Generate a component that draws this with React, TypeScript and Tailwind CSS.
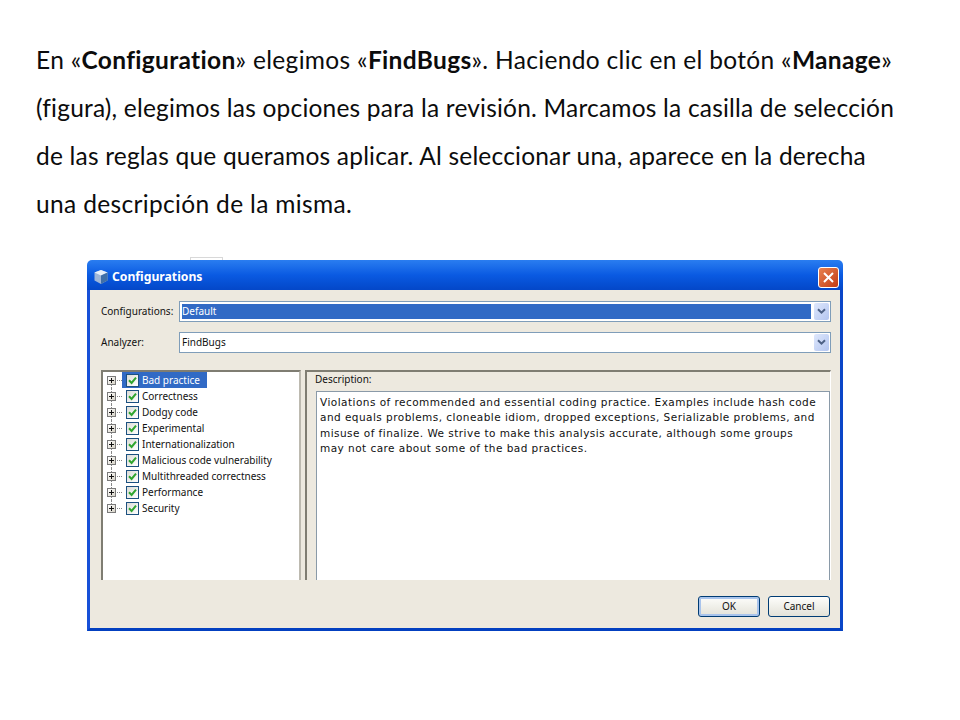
const rules = [
  "Bad practice",
  "Correctness",
  "Dodgy code",
  "Experimental",
  "Internationalization",
  "Malicious code vulnerability",
  "Multithreaded correctness",
  "Performance",
  "Security",
];

function Chevron() {
  return (
    <div className="w-[15px] h-[17px] rounded-[2px] bg-gradient-to-br from-[#dfe8fc] to-[#b3c5f0] flex items-center justify-center shrink-0">
      <svg width="9" height="7" viewBox="0 0 9 7">
        <path d="M1 1.2 L4.5 4.7 L8 1.2" fill="none" stroke="#4d6185" strokeWidth="2" />
      </svg>
    </div>
  );
}

function Combo({ label, value, selected }: { label: string; value: string; selected?: boolean }) {
  return (
    <div className="flex items-center h-[21px]">
      <div className="w-[78px] shrink-0 text-[10px] text-[#111]">{label}</div>
      <div className="w-[652px] h-[21px] border border-[#7f9db9] bg-white flex items-center pl-[2px] pr-[1px] gap-[3px]">
        <div className={selected ? "flex-1 h-[15px] bg-[#316ac5] text-white flex items-center text-[10px]" : "flex-1 h-[15px] text-[#111] flex items-center text-[10px]"}>
          {value}
        </div>
        <Chevron />
      </div>
    </div>
  );
}

function TreeRow({ label, first, last }: { label: string; first?: boolean; last?: boolean }) {
  return (
    <div className="h-[16px] flex items-center relative">
      <div
        className={
          last
            ? "absolute left-[7px] top-0 h-[8px] border-l border-dotted border-[#888]"
            : first
              ? "absolute left-[7px] top-[8px] h-[8px] border-l border-dotted border-[#888]"
              : "absolute left-[7px] top-0 h-[16px] border-l border-dotted border-[#888]"
        }
      />
      <div className="absolute left-[8px] top-[8px] w-[10px] border-t border-dotted border-[#888]" />
      <div className="relative ml-[3px] w-[9px] h-[9px] border border-[#7a7a7a] bg-gradient-to-br from-white to-[#d6d2c6] flex items-center justify-center shrink-0">
        <svg width="7" height="7" viewBox="0 0 7 7">
          <path d="M1 3.5 H6 M3.5 1 V6" stroke="#111" strokeWidth="1" />
        </svg>
      </div>
      <div className={first ? "relative ml-[6px] pl-[4px] h-[16px] w-[85px] bg-[#316ac5] text-white flex items-center" : "relative ml-[6px] pl-[4px] h-[16px] text-[#111] flex items-center"}>
        <div className="w-[13px] h-[13px] border border-[#1c5180] bg-gradient-to-br from-[#dcdcd7] to-white flex items-center justify-center shrink-0">
          <svg width="9" height="9" viewBox="0 0 9 9">
            <path d="M1 4.3 L3.6 7 L8 1.6" fill="none" stroke="#2fa52f" strokeWidth="2" />
          </svg>
        </div>
        <span className="ml-[3px] text-[10px] whitespace-nowrap">{label}</span>
      </div>
    </div>
  );
}

function XpButton({ label, active }: { label: string; active?: boolean }) {
  return (
    <div
      className={
        active
          ? "w-[62px] h-[21px] rounded-[3px] border border-[#003c74] bg-gradient-to-b from-[#fdfdfb] to-[#e3e2d8] shadow-[inset_0_0_0_2px_#a9c4ec] flex items-center justify-center text-[10px] text-[#111]"
          : "w-[62px] h-[21px] rounded-[3px] border border-[#003c74] bg-gradient-to-b from-[#fdfdfb] to-[#e3e2d8] flex items-center justify-center text-[10px] text-[#111]"
      }
    >
      {label}
    </div>
  );
}

export default function App() {
  return (
    <div className="w-[960px] h-[720px] bg-white overflow-hidden pt-[36px] pl-[36px] relative">
      <div className="font-['Lato',sans-serif] text-[24.5px] text-[#0c0c0c]">
        <div className="h-[48px] leading-[48px] whitespace-nowrap tracking-[0.32px]">
          En «<b className="font-bold">Configuration</b>» elegimos «<b className="font-bold">FindBugs</b>». Haciendo clic en el botón «<b className="font-bold">Manage</b>»
        </div>
        <div className="h-[48px] leading-[48px] whitespace-nowrap tracking-[0.2px]">
          (figura), elegimos las opciones para la revisión. Marcamos la casilla de selección
        </div>
        <div className="h-[48px] leading-[48px] whitespace-nowrap tracking-[0.2px]">
          de las reglas que queramos aplicar. Al seleccionar una, aparece en la derecha
        </div>
        <div className="h-[48px] leading-[48px] whitespace-nowrap tracking-[0.34px]">
          una descripción de la misma.
        </div>
      </div>

      <div className="absolute left-[190px] top-[257px] w-[33px] h-[3px] border-x border-t border-[#d8d8d8]" />

      <div className="mt-[32px] ml-[51px] w-[756px] h-[371px] rounded-t-[5px] overflow-hidden flex flex-col font-['Noto_Sans',sans-serif]">
        <div className="h-[30px] shrink-0 bg-gradient-to-b from-[#2a7df0] via-[#0a5ae2] to-[#0447c8] flex items-center pl-[6px] pr-[4px] pt-[4px] justify-between">
          <div className="flex items-center gap-[3px]">
            <svg width="16" height="16" viewBox="0 0 16 16">
              <path d="M8 1 L14.5 3.5 V11.5 L8 15 L1.5 11.5 V3.5 Z" fill="#9fb6d8" />
              <path d="M8 1 L14.5 3.5 L8 6.5 L1.5 3.5 Z" fill="#e8f0fa" />
              <path d="M8 6.5 V15 L14.5 11.5 V3.5 Z" fill="#3f6fa8" />
            </svg>
            <span className="text-[12.2px] font-bold text-white">Configurations</span>
          </div>
          <div className="w-[21px] h-[21px] rounded-[3px] border border-white bg-gradient-to-br from-[#e8814f] to-[#c23a12] flex items-center justify-center">
            <svg width="13" height="13" viewBox="0 0 13 13">
              <path d="M2 2 L11 11 M11 2 L2 11" stroke="#fff" strokeWidth="2" />
            </svg>
          </div>
        </div>

        <div className="flex-1 flex flex-col border-x-[3px] border-b-[3px] border-l-[#1750d8] border-r-[#0a46c8] border-b-[#0340c0] bg-[#ede9df] pl-[11px] pt-[11px]">
          <div className="flex flex-col gap-[10px]">
            <Combo label="Configurations:" value="Default" selected />
            <Combo label="Analyzer:" value="FindBugs" />
          </div>

          <div className="mt-[17px] flex h-[210px] gap-[4px]">
            <div className="w-[200px] h-[210px] border-2 border-b-0 border-t-[#7f7d72] border-l-[#7f7d72] border-r-[#bdbab0] bg-white pl-[1px]">
              {rules.map((r, i) => (
                <TreeRow key={r} label={r} first={i === 0} last={i === rules.length - 1} />
              ))}
            </div>
            <div className="w-[526px] h-[210px] border-t-2 border-l-2 border-t-[#7f7d72] border-l-[#7f7d72] border-r border-r-[#fff] flex flex-col pl-[9px]">
              <div className="h-[19px] -ml-[1px] pb-[5px] text-[10px] text-[#111] flex items-center">Description:</div>
              <div className="flex-1 border border-b-0 border-[#8a9aa8] bg-white pl-[3px] pt-[3px] font-['DejaVu_Sans',sans-serif] text-[10.5px] tracking-[0.46px] leading-[15.4px] text-[#111] whitespace-nowrap">
                <div>Violations of recommended and essential coding practice. Examples include hash code</div>
                <div>and equals problems, cloneable idiom, dropped exceptions, Serializable problems, and</div>
                <div>misuse of finalize. We strive to make this analysis accurate, although some groups</div>
                <div>may not care about some of the bad practices.</div>
              </div>
            </div>
          </div>

          <div className="flex justify-end gap-[8px] mt-[16px] pr-[10px]">
            <XpButton label="OK" active />
            <XpButton label="Cancel" />
          </div>
        </div>
      </div>
    </div>
  );
}
